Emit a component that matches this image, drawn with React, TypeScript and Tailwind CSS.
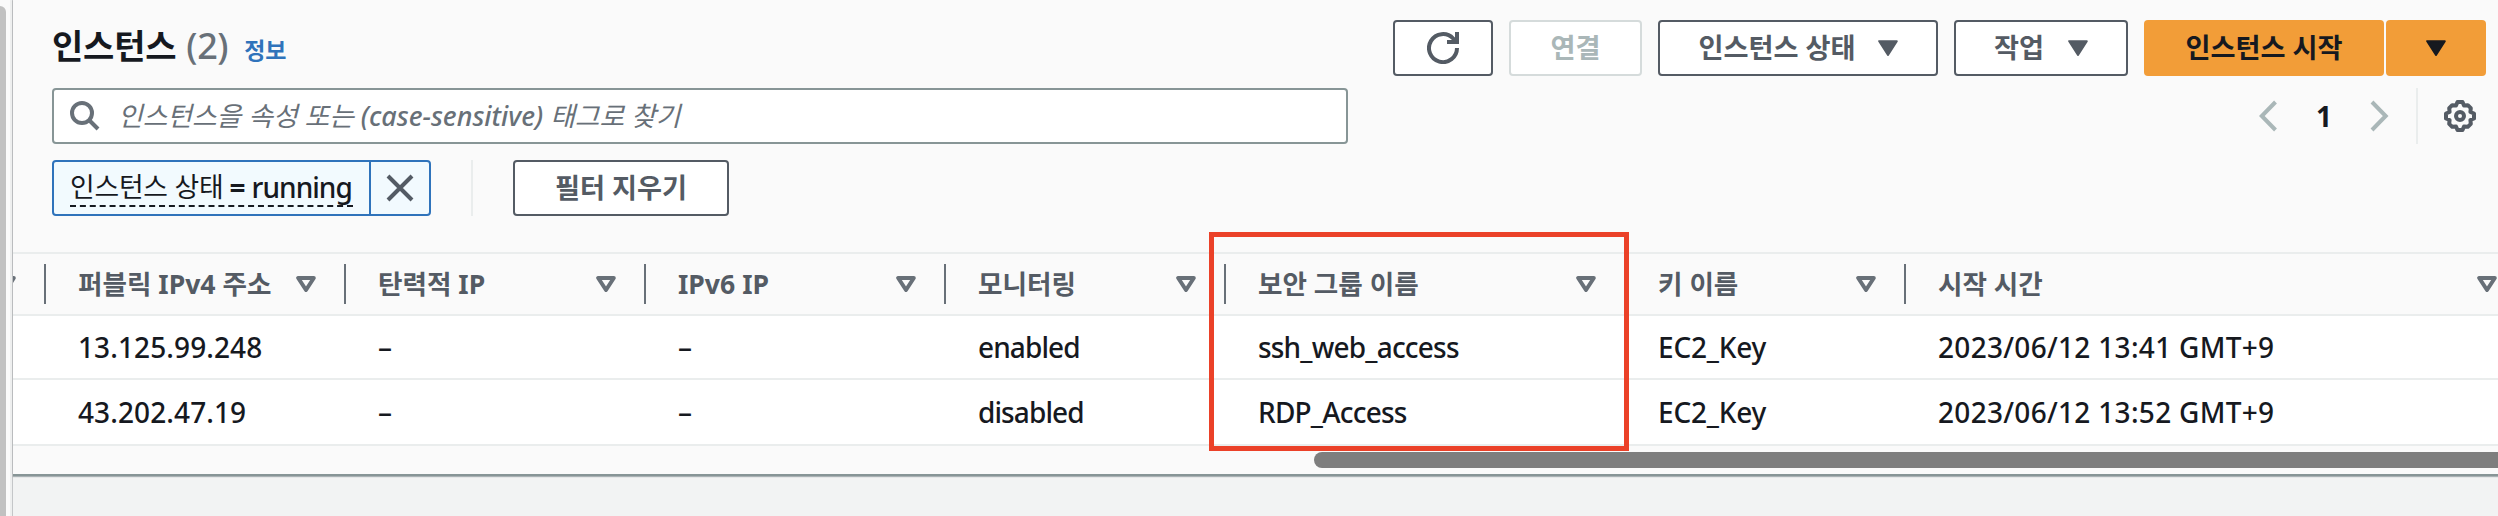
import React from "react";

const FONT = "font-['Noto_Sans','Noto_Sans_CJK_KR',sans-serif]";

function Caret({ className = "" }: { className?: string }) {
  return (
    <svg className={className} width="20" height="16" viewBox="0 0 20 16" fill="currentColor" stroke="currentColor" strokeWidth="2" strokeLinejoin="round">
      <path d="M1.2 1.2H18.8L10 15Z" />
    </svg>
  );
}

function SortIcon() {
  return (
    <svg className="shrink-0 text-[#687078]" width="20" height="16" viewBox="0 0 20 16" fill="none" stroke="currentColor" strokeWidth="4" strokeLinejoin="round">
      <path d="M2.2 2H17.8L10 14Z" />
    </svg>
  );
}

type Column = { name: string; width: string; track: string; rows: [string, string] };

const columns: Column[] = [
  { name: "퍼블릭 IPv4 주소", width: "w-[300px]", track: "tracking-[0.1px]", rows: ["13.125.99.248", "43.202.47.19"] },
  { name: "탄력적 IP", width: "w-[300px]", track: "", rows: ["–", "–"] },
  { name: "IPv6 IP", width: "w-[300px]", track: "", rows: ["–", "–"] },
  { name: "모니터링", width: "w-[280px]", track: "tracking-[-0.9px]", rows: ["enabled", "disabled"] },
  { name: "보안 그룹 이름", width: "w-[400px]", track: "tracking-[-0.8px]", rows: ["ssh_web_access", "RDP_Access"] },
  { name: "키 이름", width: "w-[280px]", track: "tracking-[-0.2px]", rows: ["EC2_Key", "EC2_Key"] },
  { name: "시작 시간", width: "w-[621px]", track: "tracking-[0.3px]", rows: ["2023/06/12 13:41 GMT+9", "2023/06/12 13:52 GMT+9"] },
];

const button = "flex h-14 shrink-0 items-center justify-center rounded border-2 bg-white text-[27.2px] font-bold";
const normal = "border-[#545b64] text-[#545b64]";

export default function App() {
  return (
    <div className={`flex h-[516px] w-[2498px] overflow-hidden bg-[#f2f3f3] text-[28px] leading-none whitespace-nowrap text-[#16191f] ${FONT}`}>
      <div className="flex w-3 shrink-0 bg-[#fafafa] pt-1.5">
        <div className="w-1.5 rounded-tr-md bg-[#c1c1c1]" />
        <div className="-mt-1.5 ml-1 w-0.5 bg-[#eeefef]" />
      </div>
      <div className="relative flex w-[2486px] shrink-0 flex-col border-l border-[#c4c6c8]">
        <div className="flex h-[476px] flex-col border-b-2 border-[#879596] bg-[#fafafa] shadow-[0_1px_1px_rgba(0,28,36,0.3)]">
          <header className="flex h-[88px] shrink-0 pt-5 pr-3 pl-[39px]">
            <h1 className="flex h-14 items-baseline pt-2">
              <span className="text-[34px] font-bold tracking-[-0.2px]">인스턴스</span>
              <span className="ml-2.5 text-[36px] font-medium tracking-[-0.4px] text-[#687078]">(2)</span>
              <a className="ml-4 text-[23px] font-bold text-[#2f73bb]">정보</a>
            </h1>
            <div className="ml-auto flex">
              <button className={`${button} ${normal} w-[100px]`}>
                <svg width="32" height="32" viewBox="0 0 32 32" fill="none" stroke="currentColor" strokeWidth="4">
                  <path d="M30 16A14 14 0 1 1 26.200 6.500L29 10M30 0V10H20" />
                </svg>
              </button>
              <button className={`${button} ml-4 w-[133px] border-[#d5dbdb] text-[#aab7b8]`}>연결</button>
              <button className={`${button} ${normal} ml-4 w-[280px]`}>
                인스턴스 상태
                <Caret className="ml-[22px]" />
              </button>
              <button className={`${button} ${normal} ml-4 w-[174px]`}>
                작업
                <Caret className="ml-6" />
              </button>
              <button className="ml-4 flex h-14 w-[240px] items-center justify-center rounded bg-[#f29d38] text-[27.2px] font-bold">인스턴스 시작</button>
              <button className="ml-0.5 flex h-14 w-[100px] items-center justify-center rounded bg-[#f29d38]">
                <Caret />
              </button>
            </div>
          </header>

          <div className="flex h-[72px] shrink-0 pl-[39px]">
            <div className="flex h-14 w-[1296px] items-center rounded border-2 border-[#879596] bg-white pl-4 text-[#687078]">
              <svg width="30" height="30" viewBox="0 0 30 30" fill="none" stroke="currentColor" strokeWidth="4">
                <circle cx="12" cy="12" r="10" />
                <path d="M19 19L28 28" />
              </svg>
              <span className="ml-[18px] text-[26.8px] italic">
                인스턴스을 속성 또는 <span className="font-medium">(case-sensitive)</span> 태그로 찾기
              </span>
            </div>
            <div className="ml-auto flex h-14 items-center pr-[22px]">
              <svg width="20" height="32" viewBox="0 0 20 32" fill="none" stroke="#aab7b8" strokeWidth="4">
                <path d="M17.500 2L3.800 16L17.500 30" />
              </svg>
              <span className="ml-9 w-5 text-center font-bold">1</span>
              <svg className="ml-9" width="20" height="32" viewBox="0 0 20 32" fill="none" stroke="#aab7b8" strokeWidth="4">
                <path d="M2 2L15.700 16L2 30" />
              </svg>
              <div className="ml-[26px] h-14 w-0.5 bg-[#eaeded]" />
              <svg className="ml-[26px]" width="32" height="32" viewBox="0 0 32 32" fill="none" stroke="#545b64" strokeWidth="4" strokeLinejoin="round">
                <path d="M13.500 2H18.500L20 5.600L23.800 5.200L26.800 8.200L26.400 12L30 13.500V18.500L26.400 20L26.800 23.800L23.800 26.800L20 26.400L18.500 30H13.500L12 26.400L8.200 26.800L5.200 23.800L5.600 20L2 18.500V13.500L5.600 12L5.200 8.200L8.200 5.200L12 5.600Z" />
                <circle cx="16" cy="16" r="4" />
              </svg>
            </div>
          </div>

          <div className="flex h-[92px] shrink-0 pl-[39px]">
            <div className="flex h-14 w-[379px] rounded border-2 border-[#2f73bb] bg-[#f2fafe]">
              <div className="flex w-[315px] items-center pl-4">
                <span className="mt-1 flex h-[34px] w-[283px] items-center border-b-2 border-dashed border-[#16191f] pb-1">
                  <span className="text-[26.8px] tracking-[-0.2px]">인스턴스 상태</span>
                  <span className="ml-1.5 font-bold">=</span>
                  <span className="ml-1.5 font-medium tracking-[-0.95px]">running</span>
                </span>
              </div>
              <div className="flex flex-1 items-center justify-center border-l-2 border-[#2f73bb]">
                <svg width="28" height="28" viewBox="0 0 28 28" fill="none" stroke="#545b64" strokeWidth="4">
                  <path d="M2 2L26 26M26 2L2 26" />
                </svg>
              </div>
            </div>
            <div className="ml-10 h-14 w-0.5 bg-[#eaeded]" />
            <button className={`${button} ${normal} ml-10 w-[216px]`}>필터 지우기</button>
          </div>

          <div className="flex h-16 shrink-0 items-center border-y-2 border-[#eaeded] text-[26.6px] font-bold text-[#545b64]">
            <div className="flex w-[31px] shrink-0 overflow-hidden">
              <div className="-ml-[17px]"><SortIcon /></div>
            </div>
            {columns.map((c) => (
              <div key={c.name} className={`flex h-10 shrink-0 items-center border-l-2 border-[#687078] pr-[28px] pl-8 ${c.width}`}>
                <span className="flex-1">{c.name}</span>
                <SortIcon />
              </div>
            ))}
          </div>
          {[0, 1].map((r) => (
            <div key={r} className={`flex shrink-0 items-center border-b-2 border-[#eaeded] bg-white pl-[31px] font-medium ${r === 0 ? "h-16" : "h-[66px] pb-px"}`}>
              {columns.map((c) => (
                <div key={c.name} className={`shrink-0 pl-[34px] ${c.width} ${c.track}`}>{c.rows[r]}</div>
              ))}
            </div>
          ))}
        </div>
        <div className="absolute top-[452px] left-[1301px] h-4 w-[1200px] rounded-l-lg bg-[#7e7e7e]" />
        <div className="absolute top-[232px] left-[1196px] h-[219px] w-[420px] border-5 border-[#eb4128]" />
      </div>
    </div>
  );
}
